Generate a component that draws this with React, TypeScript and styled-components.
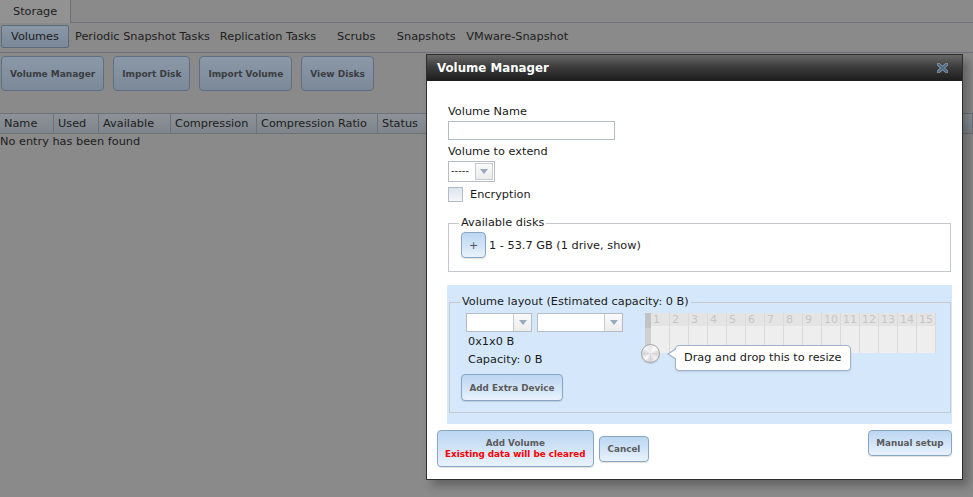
import React from "react";
import styled, { createGlobalStyle } from "styled-components";

const Global = createGlobalStyle`
  html, body { margin: 0; padding: 0; }
  body {
    background: #8a8a8a;
    font-family: "DejaVu Sans", Verdana, sans-serif;
    font-size: 11.3px;
    color: #202020;
  }
  * { box-sizing: border-box; }
`;

const Page = styled.div`
  position: relative;
  width: 973px;
  height: 497px;
  overflow: hidden;
  background: #8a8a8a;
`;

/* ---------- background page ---------- */
const TopTabs = styled.div`
  display: flex;
  height: 23px;
  border-bottom: 1px solid #6e7177;
`;

const TopTab = styled.div`
  height: 23px;
  margin-bottom: -1px;
  padding: 0 13px;
  line-height: 23px;
  background: #929292;
  border-right: 1px solid #6d6d6d;
`;

const SubTabs = styled.div`
  display: flex;
  height: 30px;
  padding: 2px 0 0 1px;
  border-bottom: 1px solid #6e7177;
`;

const SubTab = styled.div<{ $active?: boolean }>`
  height: 23px;
  min-width: 68px;
  padding: 0 3px;
  margin-right: 2px;
  line-height: 21px;
  text-align: center;
  white-space: nowrap;
  border-radius: 2px;
  border: 1px solid ${(p) => (p.$active ? "#5a6b7e" : "transparent")};
  background: ${(p) =>
    p.$active ? "linear-gradient(#8896a5, #7a8897)" : "transparent"};
`;

const Actions = styled.div`
  display: flex;
  gap: 9px;
  padding: 3px 0 0 1px;
`;

const PageButton = styled.div`
  height: 35px;
  padding: 0 8px;
  display: flex;
  align-items: center;
  border: 1px solid #5e6f83;
  border-radius: 4px;
  background: linear-gradient(#8a98a7, #7c8998);
  color: #3a3d41;
  font-weight: bold;
  font-size: 9px;
  white-space: nowrap;
`;

const TableHead = styled.div`
  display: grid;
  grid-template-columns: 54px 45px 72px 86px 121px 1fr;
  height: 21px;
  margin-top: 22px;
  border-top: 1px solid #6c7278;
  border-bottom: 1px solid #6c7278;
  background: linear-gradient(#8c9298, #7f858b);
`;

const HeadCell = styled.div`
  padding: 0 4px;
  line-height: 19px;
  white-space: nowrap;
  border-right: 1px solid #6c7278;
`;

const EmptyRow = styled.div`
  line-height: 16px;
`;

/* ---------- dialog ---------- */
const Dialog = styled.div`
  position: absolute;
  left: 426px;
  top: 54px;
  width: 537px;
  height: 426px;
  border: 1px solid #2e2e2e;
  background: #fff;
  box-shadow: 6px 6px 9px rgba(0, 0, 0, 0.28);
  display: flex;
  flex-direction: column;
  color: #1a1a1a;
`;

const TitleBar = styled.div`
  flex: none;
  height: 26px;
  display: flex;
  align-items: center;
  justify-content: space-between;
  padding: 0 14px 1px 10px;
  background: linear-gradient(#676767 0%, #3d3d3d 45%, #1c1c1c 100%);
  color: #fff;
  font-weight: bold;
  font-size: 11.8px;
`;

const Body = styled.div`
  display: flex;
  flex-direction: column;
  padding: 0 10px;
`;

const Form = styled.div`
  display: flex;
  flex-direction: column;
  align-items: flex-start;
  padding: 24px 1px 0 11px;
`;

const Label = styled.div<{ $gap?: number }>`
  line-height: 14px;
  margin-top: ${(p) => p.$gap ?? 0}px;
`;

const TextInput = styled.div`
  width: 167px;
  height: 19px;
  margin-top: 2px;
  border: 1px solid #b5bcc7;
  background: #fff;
`;

const Select = styled.div<{ $w: number; $h: number }>`
  width: ${(p) => p.$w}px;
  height: ${(p) => p.$h}px;
  display: flex;
  align-items: stretch;
  border: 1px solid #b5bcc7;
  background: #fff;
`;

const SelectValue = styled.div`
  flex: 1;
  padding-left: 2px;
  font-size: 10px;
  line-height: 17px;
  color: #333;
`;

const ArrowBox = styled.div<{ $inset?: boolean }>`
  width: 18px;
  margin: ${(p) => (p.$inset ? "1px" : "0")};
  display: flex;
  align-items: center;
  justify-content: center;
  border-left: 1px solid #c6ccd4;
  ${(p) => (p.$inset ? "border: 1px solid #c6ccd4;" : "")}
  background: linear-gradient(#fafafa, #ececec);
`;

const Arrow = () => (
  <svg width="8" height="5" viewBox="0 0 8 5">
    <path d="M0 0 H8 L4 5 Z" fill="#98a9c0" />
  </svg>
);

const CheckRow = styled.div`
  display: flex;
  align-items: center;
  gap: 7px;
  margin-top: 5px;
`;

const CheckBox = styled.div`
  width: 15px;
  height: 15px;
  border: 1px solid #b3bcc6;
  background: linear-gradient(#dbe4ee, #f4f7fa);
`;

const Fieldset = styled.fieldset<{ $pad: string }>`
  align-self: stretch;
  margin: 0;
  min-width: 0;
  border: 1px solid #c5c8cc;
  padding: ${(p) => p.$pad};
`;

const Legend = styled.legend`
  padding: 0 2px;
  line-height: 14px;
`;

const DiskRow = styled.div`
  display: flex;
  align-items: center;
  gap: 3px;
  margin-left: 2px;
`;

const DlgButton = styled.div<{ $h?: number }>`
  ${(p) => (p.$h ? `height: ${p.$h}px;` : "")}
  padding: 0 7.5px;
  display: flex;
  flex-direction: column;
  align-items: center;
  justify-content: center;
  border: 1px solid #88a5c4;
  border-radius: 4px;
  background: linear-gradient(#bcd6f2 0%, #d3e5f8 55%, #e9f2fc 100%);
  box-shadow: 0 1px 1px rgba(0, 0, 0, 0.12);
  color: #5b5b5b;
  font-weight: bold;
  font-size: 8.8px;
  white-space: nowrap;
  flex: none;
`;

const PlusButton = styled(DlgButton)`
  width: 25px;
  padding: 0;
  font-weight: normal;
  font-size: 11px;
  color: #555;
`;

const TwoLine = styled(DlgButton)`
  padding: 7px 7px 6px;
  line-height: 11px;
`;

const CancelButton = styled(DlgButton)`
  padding: 0 8px;
`;

const Warn = styled.span`
  color: #ff0000;
`;

const LayoutArea = styled.div`
  margin: 13px 0 0 10px;
  padding: 10px 1px 11px 2px;
  background: #d5e8fb;
`;

const LayoutRow = styled.div`
  display: flex;
  align-items: flex-start;
`;

const LeftCol = styled.div`
  width: 185px;
  flex: none;
  display: flex;
  flex-direction: column;
  align-items: flex-start;
`;

const SelectPair = styled.div`
  display: flex;
  gap: 5px;
  margin-left: 6px;
`;

const Info = styled.div<{ $first?: boolean }>`
  margin-left: 8px;
  line-height: 18px;
  margin-top: ${(p) => (p.$first ? 1 : 0)}px;
`;

const ExtraButton = styled(DlgButton)`
  margin: 5px 0 0 1px;
`;

const Grid = styled.div`
  position: relative;
  display: flex;
  height: 40px;
`;

const Strip = styled.div`
  width: 6px;
  display: flex;
  flex-direction: column;
  background: #d0d0d0;
`;

const StripHead = styled.div`
  height: 15px;
  background: #c2c2c2;
`;

const Col = styled.div`
  width: 19px;
  display: flex;
  flex-direction: column;
  border-right: 1px solid #dadada;
  background: #eeeeee;
`;

const ColHead = styled.div`
  height: 13px;
  padding-left: 2px;
  background: #e4e4e4;
  color: #c6c6c6;
  font-size: 11px;
  line-height: 13px;
`;

const Knob = styled.div`
  position: absolute;
  left: -4px;
  top: 31px;
  width: 19px;
  height: 19px;
  border-radius: 50%;
  border: 1px solid #a8a8a8;
  background:
    conic-gradient(from 0deg at 50% 50%, #e9e9e9, #fbfbfb 12%, #d6d6d6 25%, #f2f2f2 38%, #d2d2d2 50%, #fafafa 62%, #d5d5d5 75%, #f3f3f3 88%, #e9e9e9);
  box-shadow: 0 1px 1px rgba(0, 0, 0, 0.15);
`;

const Tooltip = styled.div`
  position: absolute;
  left: 30px;
  top: 32px;
  height: 26px;
  padding: 0 8px;
  line-height: 24px;
  white-space: nowrap;
  border: 1px solid #9fb2ca;
  border-radius: 4px;
  background: #fff;
  box-shadow: 0 1px 2px rgba(0, 0, 0, 0.12);
  &::before,
  &::after {
    content: "";
    position: absolute;
    top: 2px;
    width: 0;
    height: 0;
    border-style: solid;
  }
  &::before {
    left: -9px;
    border-width: 6px 9px 6px 0;
    border-color: transparent #9fb2ca transparent transparent;
  }
  &::after {
    left: -7px;
    top: 3px;
    border-width: 5px 8px 5px 0;
    border-color: transparent #fff transparent transparent;
  }
`;

const ButtonRow = styled.div`
  display: flex;
  justify-content: space-between;
  align-items: flex-start;
  margin-top: 6px;
`;

const LeftButtons = styled.div`
  display: flex;
  align-items: center;
  gap: 5px;
`;

const CloseIcon = () => (
  <svg width="11" height="10" viewBox="0 0 11 10">
    <path
      d="M1.5 1.5 L9.5 8.5 M9.5 1.5 L1.5 8.5"
      stroke="#8797aa"
      strokeWidth="3.6"
      strokeLinecap="square"
    />
    <path
      d="M1.5 1.5 L9.5 8.5 M9.5 1.5 L1.5 8.5"
      stroke="#526982"
      strokeWidth="1.8"
      strokeLinecap="square"
    />
  </svg>
);

const subTabs = [
  "Volumes",
  "Periodic Snapshot Tasks",
  "Replication Tasks",
  "Scrubs",
  "Snapshots",
  "VMware-Snapshot",
];

const pageButtons = ["Volume Manager", "Import Disk", "Import Volume", "View Disks"];
const columns = ["Name", "Used", "Available", "Compression", "Compression Ratio", "Status"];

export default function App() {
  return (
    <Page>
      <Global />
      <TopTabs>
        <TopTab>Storage</TopTab>
      </TopTabs>
      <SubTabs>
        {subTabs.map((t, i) => (
          <SubTab key={t} $active={i === 0}>
            {t}
          </SubTab>
        ))}
      </SubTabs>
      <Actions>
        {pageButtons.map((b) => (
          <PageButton key={b}>{b}</PageButton>
        ))}
      </Actions>
      <TableHead>
        {columns.map((c) => (
          <HeadCell key={c}>{c}</HeadCell>
        ))}
      </TableHead>
      <EmptyRow>No entry has been found</EmptyRow>

      <Dialog>
        <TitleBar>
          <span>Volume Manager</span>
          <CloseIcon />
        </TitleBar>
        <Body>
          <Form>
            <Label>Volume Name</Label>
            <TextInput />
            <Label $gap={5}>Volume to extend</Label>
            <Select $w={47} $h={21} style={{ marginTop: 2 }}>
              <SelectValue>-----</SelectValue>
              <ArrowBox $inset>
                <Arrow />
              </ArrowBox>
            </Select>
            <CheckRow>
              <CheckBox />
              <span>Encryption</span>
            </CheckRow>
            <Fieldset $pad="2px 10px 13px 10px" style={{ marginTop: 14 }}>
              <Legend>Available disks</Legend>
              <DiskRow>
                <PlusButton $h={26}>+</PlusButton>
                <span>1 - 53.7 GB (1 drive, show)</span>
              </DiskRow>
            </Fieldset>
          </Form>
          <LayoutArea>
            <Fieldset $pad="4px 13px 11px 10px">
              <Legend>Volume layout (Estimated capacity: 0 B)</Legend>
              <LayoutRow>
                <LeftCol>
                  <SelectPair>
                    <Select $w={66} $h={19}>
                      <SelectValue />
                      <ArrowBox>
                        <Arrow />
                      </ArrowBox>
                    </Select>
                    <Select $w={86} $h={19}>
                      <SelectValue />
                      <ArrowBox>
                        <Arrow />
                      </ArrowBox>
                    </Select>
                  </SelectPair>
                  <Info $first>0x1x0 B</Info>
                  <Info>Capacity: 0 B</Info>
                  <ExtraButton $h={27}>Add Extra Device</ExtraButton>
                </LeftCol>
                <Grid>
                  <Strip>
                    <StripHead />
                  </Strip>
                  {Array.from({ length: 15 }, (_, i) => (
                    <Col key={i}>
                      <ColHead>{i + 1}</ColHead>
                    </Col>
                  ))}
                  <Knob />
                  <Tooltip>Drag and drop this to resize</Tooltip>
                </Grid>
              </LayoutRow>
            </Fieldset>
          </LayoutArea>
          <ButtonRow>
            <LeftButtons>
              <TwoLine>
                <span>Add Volume</span>
                <Warn>Existing data will be cleared</Warn>
              </TwoLine>
              <CancelButton $h={26}>Cancel</CancelButton>
            </LeftButtons>
            <DlgButton $h={26}>Manual setup</DlgButton>
          </ButtonRow>
        </Body>
      </Dialog>
    </Page>
  );
}
